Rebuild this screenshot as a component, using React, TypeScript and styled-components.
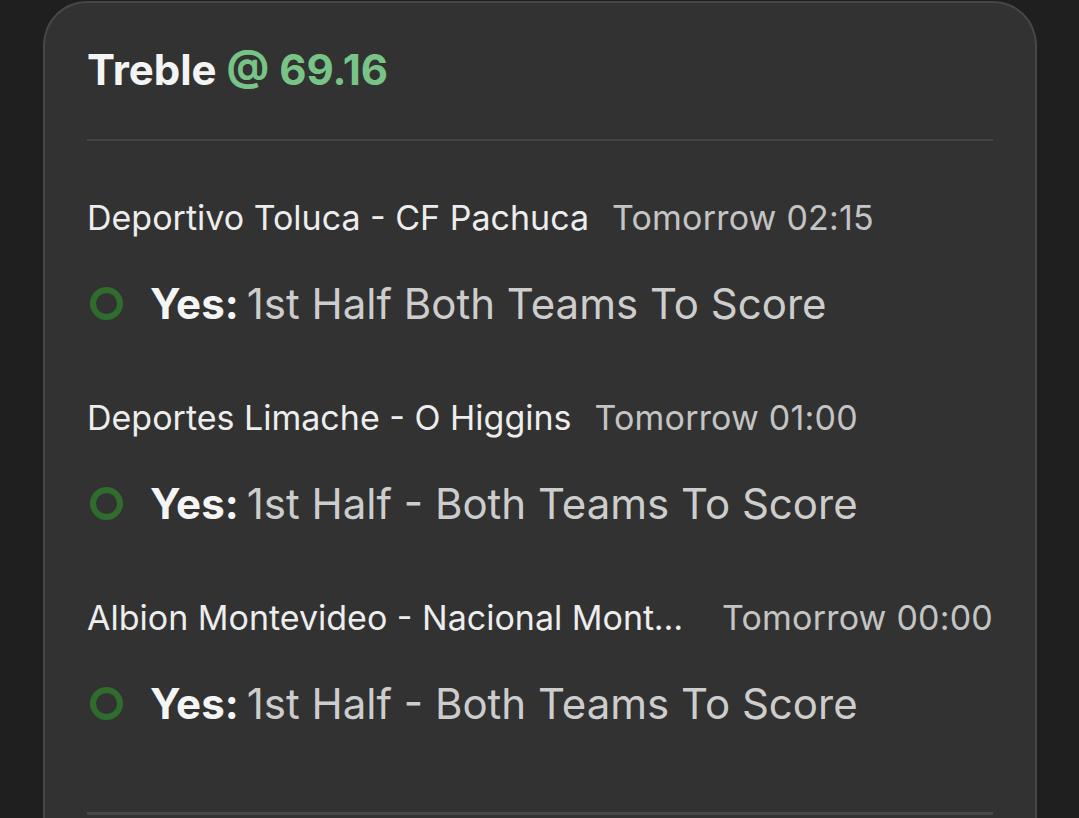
import React from 'react';
import styled, { createGlobalStyle } from 'styled-components';

const GlobalStyle = createGlobalStyle`
    html, body {
        margin: 0;
        padding: 0;
        background: #1f1f1f;
        font-family: Inter, "Noto Sans", sans-serif;
    }
`;

interface Leg {
    teams: string;
    kickoff: string;
    pick: string;
    market: string;
}

const legs: Leg[] = [
    {
        teams: 'Deportivo Toluca - CF Pachuca',
        kickoff: 'Tomorrow 02:15',
        pick: 'Yes:',
        market: '1st Half Both Teams To Score',
    },
    {
        teams: 'Deportes Limache - O Higgins',
        kickoff: 'Tomorrow 01:00',
        pick: 'Yes:',
        market: '1st Half - Both Teams To Score',
    },
    {
        teams: 'Albion Montevideo - Nacional Montevideo',
        kickoff: 'Tomorrow 00:00',
        pick: 'Yes:',
        market: '1st Half - Both Teams To Score',
    },
];

const Page = styled.div`
    padding: 1px 42px 0 43px;
    height: 817px;
    overflow: hidden;
`;

const Card = styled.div`
    background: #323232;
    border: 2px solid #474747;
    border-bottom: none;
    border-radius: 44px 44px 0 0;
    padding: 0 42px;
    height: 900px;
`;

const Header = styled.div`
    height: 138px;
    display: flex;
    align-items: center;
    border-bottom: 2px solid #444444;
    box-sizing: border-box;
`;

const Title = styled.h2`
    margin: 0;
    margin-top: -4px;
    font-size: 42px;
    font-weight: 700;
    color: #f4f4f4;
`;

const Odds = styled.span`
    color: #78c487;
`;

const LegList = styled.div`
    padding-top: 52px;
    padding-bottom: 19px;
`;

const LegBlock = styled.div`
    height: 200px;
`;

const MatchRow = styled.div`
    display: flex;
    align-items: baseline;
    gap: 17px;
    height: 50px;
    line-height: 50px;
`;

const Teams = styled.span`
    font-size: 34px;
    color: #ededed;
    white-space: nowrap;
    overflow: hidden;
    text-overflow: ellipsis;
    min-width: 0;
    padding-right: 6px;
`;

const Kickoff = styled.span`
    font-size: 34px;
    letter-spacing: 0.2px;
    color: #c4c4c4;
    white-space: nowrap;
    flex-shrink: 0;
`;

const SelectionRow = styled.div`
    display: flex;
    align-items: center;
    margin-top: 35px;
    height: 50px;
`;

const Marker = styled.span`
    width: 33px;
    height: 33px;
    box-sizing: border-box;
    border-radius: 50%;
    border: 6px solid #2f6c2d;
    margin-left: 3px;
    margin-right: 27px;
    flex-shrink: 0;
`;

const Pick = styled.span`
    font-size: 42px;
    font-weight: 700;
    color: #f5f5f5;
    margin-right: 8px;
`;

const Market = styled.span`
    font-size: 42px;
    color: #cdcdcd;
`;

const Footer = styled.div`
    border-top: 3px solid #484848;
`;

const MatchHeading: React.FC<{ leg: Leg }> = ({ leg }) => (
    <MatchRow>
        <Teams title={leg.teams}>{leg.teams}</Teams>
        <Kickoff>{leg.kickoff}</Kickoff>
    </MatchRow>
);

export default function App() {
    return (
        <Page>
            <GlobalStyle />
            <Card>
                <Header>
                    <Title>
                        Treble <Odds>@ 69.16</Odds>
                    </Title>
                </Header>
                <LegList>
                    {legs.map(leg => (
                        <LegBlock key={leg.teams}>
                            <MatchHeading leg={leg} />
                            <SelectionRow>
                                <Marker />
                                <Pick>{leg.pick}</Pick>
                                <Market>{leg.market}</Market>
                            </SelectionRow>
                        </LegBlock>
                    ))}
                </LegList>
                <Footer />
            </Card>
        </Page>
    );
}
